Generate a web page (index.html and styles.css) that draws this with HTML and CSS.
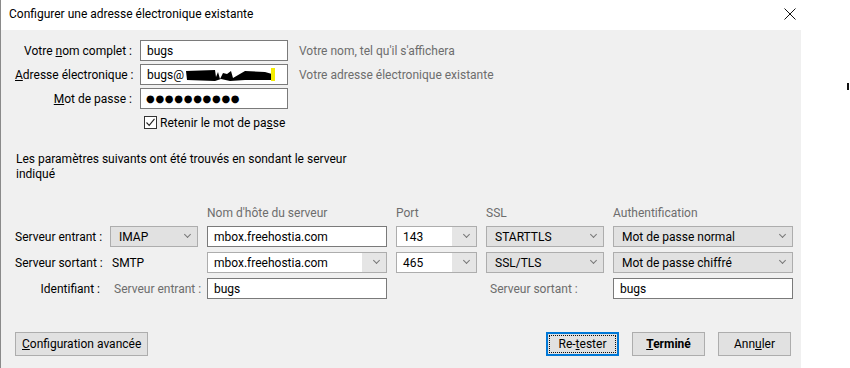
FILE: index.html
```html
<!DOCTYPE html>
<html lang="fr">
<head>
    <meta charset="UTF-8">
    <meta name="viewport" content="width=device-width, initial-scale=1.0">
    <title>Configurer une adresse électronique existante</title>
    <link rel="stylesheet" href="styles.css">
</head>
<body>
    <div class="window">
        <header class="titlebar">
            <span class="title">Configurer une adresse électronique existante</span>
            <svg class="close" width="12" height="12" viewBox="0 0 12 12">
                <path d="M0.5 0.5 L11.5 11.5 M11.5 0.5 L0.5 11.5" stroke="#111" stroke-width="1" fill="none"/>
            </svg>
        </header>

        <div class="content">
            <main class="panel">
                <div class="identity">
                    <label class="lbl">Votre <u>n</u>om complet :</label>
                    <div class="field">bugs</div>
                    <span class="hint">Votre nom, tel qu'il s'affichera</span>

                    <label class="lbl"><u>A</u>dresse électronique :</label>
                    <div class="field"><span>bugs@</span><svg class="redact" width="92" height="14" viewBox="0 0 92 14">
                        <path d="M1 3 L30 2 L31 9 L33 4 L35 11 L38 5 L42 6 L46 3 L48 10 L60 3 L80 4 L87 6 L88 12 L60 12 L45 13 L36 11 L30 13 L2 12 Z" fill="#000"/>
                        <rect x="86" y="0" width="4" height="13" fill="#f4ec00"/>
                    </svg></div>
                    <span class="hint">Votre adresse électronique existante</span>

                    <label class="lbl"><u>M</u>ot de passe :</label>
                    <div class="field dots">●●●●●●●●●●</div>
                    <span></span>

                    <span></span>
                    <label class="check">
                        <span class="box">
                            <svg width="11" height="11" viewBox="0 0 11 11"><path d="M1.5 5.5 L4.2 8.3 L9.5 1.8" stroke="#222" stroke-width="1.1" fill="none"/></svg>
                        </span>
                        <span>Retenir le mot de pa<u>s</u>se</span>
                    </label>
                </div>

                <p class="found">Les paramètres suivants ont été trouvés en sondant le serveur indiqué</p>

                <div class="servers">
                    <span></span>
                    <span></span>
                    <span class="col">Nom d'hôte du serveur</span>
                    <span class="col">Port</span>
                    <span class="col">SSL</span>
                    <span class="col">Authentification</span>

                    <span class="lbl">Serveur entrant :</span>
                    <div class="select">IMAP<i class="chev"></i></div>
                    <div class="field">mbox.freehostia.com</div>
                    <div class="combo"><span class="val">143</span><span class="drop"><i class="chev"></i></span></div>
                    <div class="select">STARTTLS<i class="chev"></i></div>
                    <div class="select">Mot de passe normal<i class="chev"></i></div>

                    <span class="lbl">Serveur sortant :</span>
                    <span class="plain">SMTP</span>
                    <div class="combo"><span class="val">mbox.freehostia.com</span><span class="drop"><i class="chev"></i></span></div>
                    <div class="combo"><span class="val">465</span><span class="drop"><i class="chev"></i></span></div>
                    <div class="select">SSL/TLS<i class="chev"></i></div>
                    <div class="select">Mot de passe chiffré<i class="chev"></i></div>

                    <span class="lbl">Identifiant :</span>
                    <span class="plain muted">Serveur entrant :</span>
                    <div class="field">bugs</div>
                    <span></span>
                    <span class="plain muted">Serveur sortant :</span>
                    <div class="field">bugs</div>
                </div>

                <div class="actions">
                    <button class="btn"><u>C</u>onfiguration avancée</button>
                    <span class="spacer"></span>
                    <button class="btn focused">Re-<u>t</u>ester</button>
                    <button class="btn default"><u>T</u>erminé</button>
                    <button class="btn">Ann<u>u</u>ler</button>
                </div>
            </main>

            <aside class="outside"><span class="mark"></span></aside>
        </div>
    </div>
</body>
</html>
```

FILE: styles.css
```css
* {
    box-sizing: border-box;
}
html, body {
    margin: 0;
    height: 100%;
}
body {
    font-family: Roboto, "Noto Sans", Arial, sans-serif;
    font-size: 12px;
    color: #000;
    background: #fff;
    overflow: hidden;
}
.window {
    height: 368px;
    display: flex;
    flex-direction: column;
    border-left: 1px solid #8a8a8a;
}
.titlebar {
    height: 30px;
    display: flex;
    align-items: center;
    padding: 0 0 2px 8px;
    background: #fff;
}
.title {
    flex: 1;
}
.close {
    margin-right: 54px;
}
.content {
    flex: 1;
    display: flex;
}
.panel {
    width: 800px;
    background: #f0f0f0;
    padding: 10px 0 0 14px;
}
.outside {
    flex: 1;
    background: #fff;
    padding: 53px 0 0 46px;
}
.mark {
    display: block;
    width: 2px;
    height: 7px;
    background: #111;
}

/* identity block */
.identity {
    display: grid;
    grid-template-columns: 117px 148px auto;
    grid-auto-rows: 21px;
    column-gap: 8px;
    row-gap: 3px;
    align-items: center;
}
.identity .hint {
    margin-left: 3px;
}
.lbl {
    text-align: right;
    white-space: nowrap;
}
.hint, .col, .muted {
    color: #6d6d6d;
}
.field {
    height: 21px;
    background: #fff;
    border: 1px solid #7a7a7a;
    padding: 0 6px;
    display: flex;
    align-items: center;
    white-space: nowrap;
    overflow: hidden;
}
.redact {
    margin-left: 1px;
}
.dots {
    font-family: "DejaVu Sans", sans-serif;
    font-size: 10px;
    letter-spacing: 0.7px;
    padding-left: 5px;
}
.check {
    grid-column: 2 / 4;
    display: flex;
    align-items: center;
    gap: 3px;
    padding-left: 4px;
    white-space: nowrap;
}
.box {
    width: 13px;
    height: 13px;
    border: 1px solid #333;
    background: #fff;
    display: flex;
    align-items: center;
    justify-content: center;
}

.found {
    margin: 19px 0 0 1px;
    line-height: 15px;
    max-width: 345px;
}

/* server table */
.servers {
    margin-top: 24px;
    display: grid;
    grid-template-columns: 86px 88px 180px 81px 118px 180px;
    grid-template-rows: 15px;
    grid-auto-rows: 21px;
    column-gap: 9px;
    row-gap: 5px;
    align-items: center;
    white-space: nowrap;
}
.servers .lbl {
    padding-right: 1px;
}
.col {
    align-self: end;
    line-height: 15px;
}
.plain {
    padding-left: 2px;
}
.plain.muted {
    padding-left: 4px;
}
.select {
    height: 21px;
    background: #e1e1e1;
    border: 1px solid #adadad;
    padding: 0 0 0 8px;
    display: flex;
    align-items: center;
}
.combo {
    height: 21px;
    background: #fff;
    border: 1px solid #adadad;
    display: flex;
}
.combo .val {
    flex: 1;
    display: flex;
    align-items: center;
    padding-left: 6px;
}
.combo .drop {
    width: 24px;
    background: #e5e5e5;
    display: flex;
    align-items: center;
}
.chev {
    margin-left: auto;
    margin-right: 7px;
    width: 5px;
    height: 5px;
    border-right: 1px solid #777;
    border-bottom: 1px solid #777;
    transform: translateY(-2px) rotate(45deg);
}

/* buttons */
.actions {
    margin-top: 33px;
    display: flex;
    align-items: center;
    padding-right: 10px;
}
.spacer {
    flex: 1;
}
.btn {
    font: inherit;
    height: 24px;
    background: #e1e1e1;
    border: 1px solid #adadad;
    padding: 0 8px;
    color: #000;
    margin-left: 13px;
    min-width: 73px;
}
.btn:first-child {
    margin-left: 0;
    padding: 0 6px;
}
.focused {
    border: 2px solid #0078d7;
    outline: 1px dotted #111;
    outline-offset: -4px;
}
.default {
    font-weight: bold;
}
```
